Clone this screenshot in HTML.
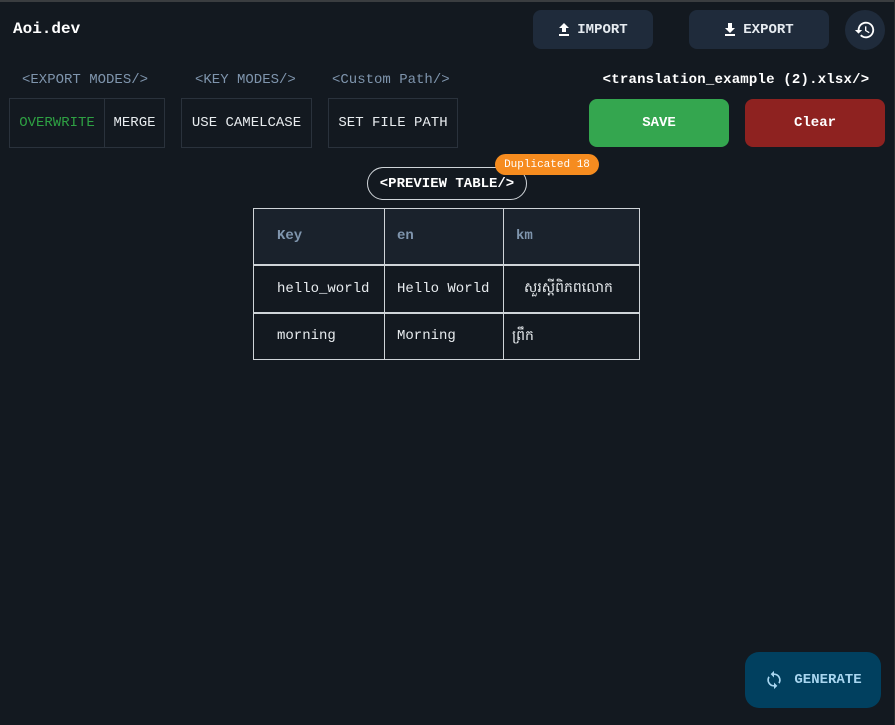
<!DOCTYPE html>
<html><head><meta charset="utf-8"><style>
*{margin:0;padding:0;box-sizing:border-box}
body{width:895px;height:725px;background:#131920;overflow:hidden;position:relative;font-family:"Liberation Mono",monospace;color:#e8ecef}
.a{position:absolute}
.c{display:flex;align-items:center;justify-content:center}
.top{left:0;top:0;width:895px;height:2px;background:#3a3d40}
.btn{background:#1f2b3b;border-radius:8px;font-weight:bold;font-size:14px;color:#e6ebf0}
.lbl{font-size:14px;color:#7f95ad;top:72px}
.box{border:1px solid #2a323c;font-size:14px;height:50px;top:98px}
table{border-collapse:collapse;font-size:14px}
td{border:1px solid #cfd4d8;padding:0 0 0 23px;text-align:left}
</style></head><body>
<div class="a top"></div>
<div class="a" style="right:0;top:0;width:1px;height:725px;background:#2a2d30"></div>
<div class="a" style="left:13px;top:20px;font-size:16px;font-weight:bold;color:#fff">Aoi.dev</div>
<div class="a btn c" style="left:533px;top:10px;width:120px;height:39px"><svg width="12" height="13" viewBox="0 0 12 13" style="margin-right:7px"><path d="M6 0L1 5h3v4h4V5h3z M1 11h10v2H1z" fill="#fff"/></svg>IMPORT</div>
<div class="a btn c" style="left:689px;top:10px;width:140px;height:39px"><svg width="12" height="13" viewBox="0 0 12 13" style="margin-right:7px"><path d="M4 0h4v5h3L6 10 1 5h3z M1 11h10v2H1z" fill="#fff"/></svg>EXPORT</div>
<div class="a c" style="left:845px;top:10px;width:40px;height:40px;border-radius:50%;background:#1f2b3b"><svg width="22" height="22" viewBox="0 0 24 24"><path d="M13 3a9 9 0 0 0-9 9H1l3.9 3.9L9 12H6a7 7 0 1 1 2.05 4.95l-1.42 1.42A9 9 0 1 0 13 3zm-1 5v5l4.28 2.54.72-1.21-3.5-2.08V8z" fill="#fff"/></svg></div>

<div class="a lbl" style="left:22px">&lt;EXPORT MODES/&gt;</div>
<div class="a lbl" style="left:195px">&lt;KEY MODES/&gt;</div>
<div class="a lbl" style="left:332px">&lt;Custom Path/&gt;</div>
<div class="a box c" style="left:9px;width:96px;color:#2ea043">OVERWRITE</div>
<div class="a box c" style="left:104px;width:61px">MERGE</div>
<div class="a box c" style="left:181px;width:131px">USE CAMELCASE</div>
<div class="a box c" style="left:328px;width:130px">SET FILE PATH</div>

<div class="a" style="left:590px;top:72px;width:292px;text-align:center;font-size:14px;letter-spacing:0.2px;white-space:nowrap;font-weight:bold;color:#fff">&lt;translation_example (2).xlsx/&gt;</div>
<div class="a c" style="left:589px;top:99px;width:140px;height:48px;background:#34a64f;border-radius:8px;font-weight:bold;font-size:14px;color:#fff">SAVE</div>
<div class="a c" style="left:745px;top:99px;width:140px;height:48px;background:#8e2220;border-radius:8px;font-weight:bold;font-size:14px;color:#fff">Clear</div>

<div class="a c" style="left:367px;top:167px;width:160px;height:33px;border:1px solid #cfd4d8;border-radius:17px;font-weight:bold;font-size:14px;color:#fff">&lt;PREVIEW TABLE/&gt;</div>
<div class="a c" style="left:495px;top:154px;width:104px;height:21px;background:#f68c1f;border-radius:11px;font-size:11px;color:#fff">Duplicated 18</div>

<table class="a" style="left:253px;top:208px;width:387px">
<tr style="height:56px;background:#1a222c;color:#7f95ad;font-weight:bold"><td style="width:131px">Key</td><td style="width:119px;padding-left:12px">en</td><td style="padding-left:12px">km</td></tr>
<tr style="height:48px;border-top:2px solid #cfd4d8"><td>hello_world</td><td style="padding-left:12px">Hello World</td><td style="padding-left:20px;font-family:'Liberation Sans',sans-serif">សួរស្តីពិភពលោក</td></tr>
<tr style="height:47px;border-top:2px solid #cfd4d8"><td>morning</td><td style="padding-left:12px">Morning</td><td style="padding-left:8px;font-family:'Liberation Sans',sans-serif">ព្រឹក</td></tr>
</table>

<div class="a c" style="left:745px;top:652px;width:136px;height:56px;background:#01405f;border-radius:14px;font-weight:bold;font-size:14px;color:#a9d6f0"><svg width="20" height="22" viewBox="0 0 24 24" style="margin-right:10px"><path d="M12 4V1L8 5l4 4V6a6 6 0 0 1 5.2 9l1.46 1.46A8 8 0 0 0 12 4zm0 14a6 6 0 0 1-5.2-9L5.34 7.54A8 8 0 0 0 12 20v3l4-4-4-4z" fill="#a9d6f0"/></svg>GENERATE</div>
</body></html>
